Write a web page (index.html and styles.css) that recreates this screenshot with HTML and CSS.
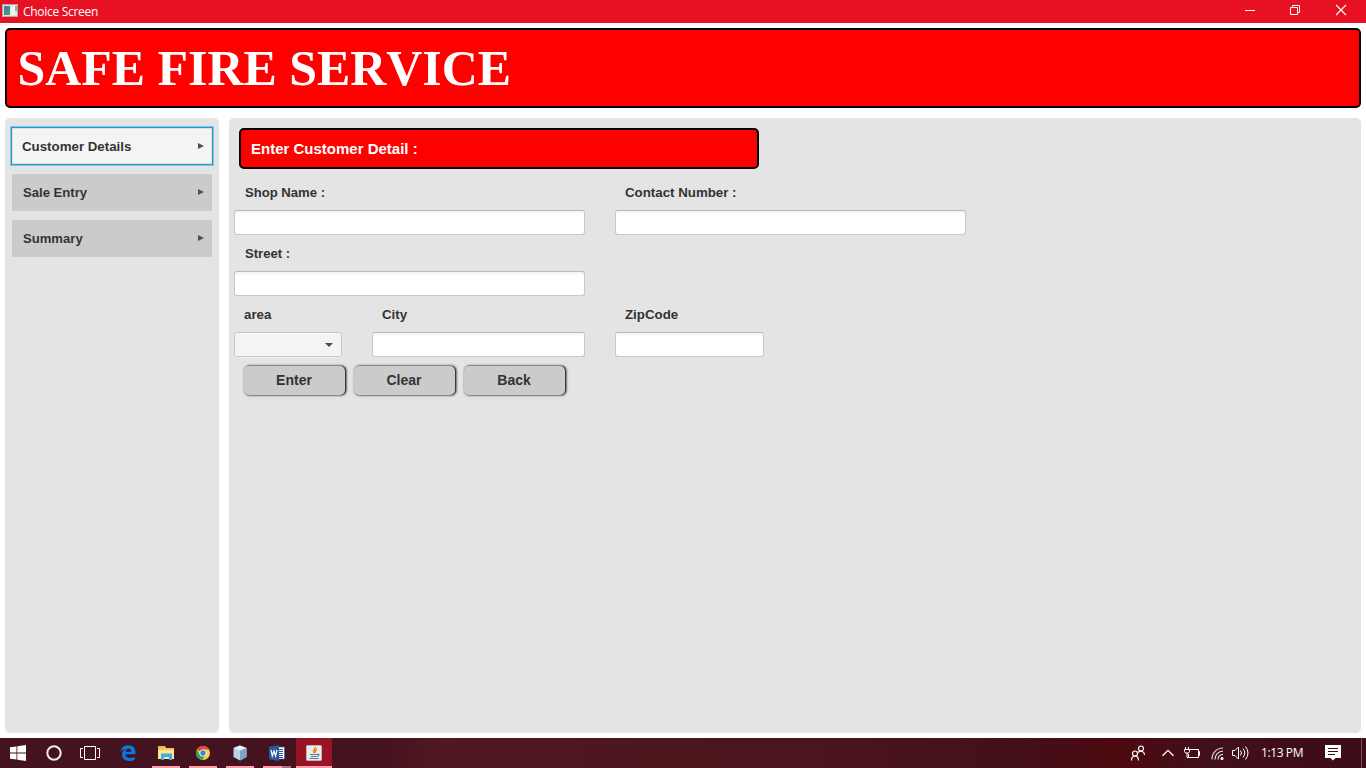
FILE: index.html
```html
<!DOCTYPE html>
<html lang="en">
<head>
<meta charset="utf-8">
<title>Choice Screen</title>
<link rel="stylesheet" href="styles.css">
</head>
<body>
<header class="titlebar">
  <svg class="app-icon" width="16" height="14" viewBox="0 0 16 14"><rect width="15" height="12" x=".5" y=".5" fill="#dfe6e9" stroke="#a9a9b4"/><defs><linearGradient id="g1" x2="1" y2="1"><stop stop-color="#4773a8"/><stop offset="1" stop-color="#4da768"/></linearGradient></defs><rect x="2" y="2" width="6" height="9" fill="url(#g1)"/><rect x="9" y="2" width="4" height="9" fill="#f4f4f4"/><rect x="13" y="2" width="2" height="5" fill="#82b5a2"/></svg>
  <span class="window-title">Choice Screen</span>
  <div class="window-controls">
    <svg width="45" height="23" viewBox="0 0 45 23"><path d="M14 10.500h10" stroke="#fff"/></svg>
    <svg width="46" height="23" viewBox="0 0 46 23"><path d="M14.500 7.500h7v7h-7zM16.500 7.500v-2h7v7h-2" fill="none" stroke="#fff"/></svg>
    <svg width="45" height="23" viewBox="0 0 45 23"><path d="M14 5l10 10M24 5L14 15" stroke="#fff" stroke-width="1.100"/></svg>
  </div>
</header>
<main class="window">
  <h1 class="banner">SAFE FIRE SERVICE</h1>
  <div class="columns">
    <nav class="sidebar">
      <button class="menu active">Customer Details<i class="arrow"></i></button>
      <button class="menu">Sale Entry<i class="arrow"></i></button>
      <button class="menu">Summary<i class="arrow"></i></button>
    </nav>
    <section class="content">
      <h2 class="section-title">Enter Customer Detail :</h2>
      <form class="form">
        <label class="field wide"><span>Shop Name :</span><input type="text"></label>
        <label class="field contact"><span>Contact Number :</span><input type="text"></label>
        <label class="field wide"><span>Street :</span><input type="text"></label>
        <div class="field area"><span>area</span><div class="combo"><svg width="8" height="4" viewBox="0 0 8 4"><path d="M0 0h8L4 4z" fill="#4b4b4b"/></svg></div></div>
        <label class="field city"><span>City</span><input type="text"></label>
        <label class="field zip"><span>ZipCode</span><input type="text"></label>
      </form>
      <div class="actions"><button>Enter</button><button>Clear</button><button>Back</button></div>
    </section>
  </div>
</main>
<footer class="taskbar">
  <div class="task start"><svg width="16" height="16" viewBox="0 0 16 16"><path d="M0 2.300L6.500 1.400v6.200H0zM7.300 1.200L16 0v7.600H7.300zM0 8.400h6.500v6.200L0 13.700zM7.300 8.400H16V16l-8.700-1.200z" fill="#fff"/></svg></div>
  <div class="task"><svg width="16" height="16" viewBox="0 0 16 16"><circle cx="8" cy="8" r="6.700" fill="none" stroke="#eee" stroke-width="2"/></svg></div>
  <div class="task view"><svg width="20" height="16" viewBox="0 0 20 16"><path d="M4.500 1.500h11v13h-11zM3 3.500H.5v9H3M17 3.500h2.500v9H17" fill="none" stroke="#fff"/></svg></div>
  <div class="task edge"><svg width="16" height="16" viewBox="0 0 16 16"><path d="M.5 7C1 2.900 4 .3 8.300.3c4.600 0 7.200 3.200 7.200 7v2H5.300c.1 2.500 2.100 3.700 4.600 3.700 1.900 0 3.400-.5 4.700-1.300v3.100c-1.400.8-3.200 1.200-5.200 1.200-4.400 0-7.400-2.500-7.400-6.400 0-2.600 1.500-4.800 3.900-5.900C3.700 4.100 1.900 5 .5 7zm4.900-.3h5.900c0-1.800-.9-3-2.800-3-1.700 0-2.800 1.100-3.100 3z" fill="#0a7ae0"/></svg></div>
  <div class="task open"><svg width="18" height="16" viewBox="0 0 18 16"><path d="M1 1h7l1 2h8v11H1z" fill="#f4c84f"/><path d="M2 2h5" stroke="#e69f2c"/><path d="M1 5h16v9H1z" fill="#ffe596"/><path d="M4 15V8.500h11V15h-3v-3H7v3z" fill="#3cafe3"/></svg></div>
  <div class="task open"><svg width="16" height="16" viewBox="0 0 16 16"><circle cx="8" cy="8" r="7" fill="#fbcf3d"/><path d="M8 8L1.900 4.500A7 7 0 0 1 14.100 4.500H8z" fill="#e84636"/><path d="M1.900 4.500A7 7 0 0 0 7.500 15L10.500 9.500 8 8 5 9.700z" fill="#35a257"/><circle cx="8" cy="8" r="3.500" fill="#fff"/><circle cx="8" cy="8" r="2.700" fill="#3c82e0"/></svg></div>
  <div class="task open"><svg width="14" height="16" viewBox="0 0 14 16"><path d="M7 .5l6.500 2.500v9L7 15.500.5 12V3z" fill="#b7d3e8"/><path d="M7 .5L13.500 3 7 5.800.5 3z" fill="#e5f1f7"/><path d="M7 5.800L13.500 3v9L7 15.500z" fill="#7ea5c6"/></svg></div>
  <div class="task open word"><svg width="16" height="16" viewBox="0 0 16 16"><path d="M9 2h6.500v12H9z" fill="#fff" stroke="#2b579a" stroke-width=".6"/><path d="M10 4.500h4M10 6.500h4M10 8.500h4M10 10.500h4M10 12.500h4" stroke="#2b579a"/><path d="M0 1.800L10 0v16L0 14.200z" fill="#2857a0"/><path d="M2 5l1.300 6L5 6l1.600 5L8 5" fill="none" stroke="#fff" stroke-width="1.200"/></svg></div>
  <div class="task open current"><svg width="16" height="16" viewBox="0 0 16 16"><rect x=".5" y=".5" width="15" height="15" rx="1" fill="#e9ecea" stroke="#b6b6b6"/><path d="M9.500 2C10 4 6 4.800 8 8M11 4.500C8.500 5.500 9.500 6.500 9 8" fill="none" stroke="#ee7b20" stroke-width="1.500"/><path d="M4 9.500h7M5 11.500h5.500M3.500 13.500h9M11 9.500c3-1 2 1.500 0 2" fill="none" stroke="#557c95" stroke-width="1.200"/></svg></div>
  <div class="tray">
    <svg class="people" width="16" height="16" viewBox="0 0 16 16"><g fill="none" stroke="#fff" stroke-width="1.200"><circle cx="5" cy="8.500" r="2.500"/><path d="M1.500 15.500c0-6 7-6 7 0"/><circle cx="11" cy="3.500" r="2.500"/><path d="M8 7.500c3-2.500 6.500-1 6.500 2.500"/></g></svg>
    <svg class="chevron" width="12" height="8" viewBox="0 0 12 8"><path d="M.5 6.800L6 1.300l5.500 5.500" fill="none" stroke="#fff" stroke-width="1.300"/></svg>
    <svg class="battery" width="16" height="12" viewBox="0 0 16 12"><path d="M6 2.500h8.500v8H4.500V7M14.500 4.500h1v4h-1M1.500 0v2M4.500 0v2M.5 2.500h5v2l-1 1.500h-3L.5 4.500zM3 6v4.500h2" fill="none" stroke="#fff"/></svg>
    <svg class="wifi" width="13" height="13" viewBox="0 0 13 13"><g fill="none" stroke="#e0d6d8" stroke-width="1.200"><path d="M1 12.500A11 11 0 0 1 12 1"/><path d="M4 12.500A8 8 0 0 1 12 4.200"/><path d="M7 12.500A5 5 0 0 1 12 7.400"/></g><circle cx="11" cy="11.500" r="1.500" fill="#fff"/></svg>
    <svg class="sound" width="17" height="14" viewBox="0 0 17 14"><g fill="none" stroke="#fff"><path d="M.5 4.500h2.500L6.500 1v12L3 9.500H.5zM8.500 4.500q2 2.500 0 5"/><path d="M11 2.500q3.500 4.500 0 9M13.500.5q5 6.500 0 13"/></g></svg>
    <time class="clock">1:13 PM</time>
    <svg class="notice" width="16" height="16" viewBox="0 0 16 16"><path d="M0 0h16v13h-5.500L8 15.500 5.500 13H0z" fill="#fff"/><path d="M3 3.500h10M3 6.500h10M3 9.500h7" stroke="#3d0c17"/></svg>
    <i class="desktop-edge"></i>
  </div>
</footer>
</body>
</html>
```
FILE: styles.css
```css
* { box-sizing: border-box; }
body { margin: 0; width: 1366px; height: 768px; overflow: hidden; display: flex; flex-direction: column; background: #fff; font-family: "Liberation Sans", Arial, sans-serif; color: #333; }
button, input { font: inherit; color: inherit; margin: 0; }
svg { display: block; flex: none; }
.titlebar { height: 23px; flex: none; background: #e81123; color: #fff; display: flex; align-items: center; padding-left: 2px; }
.app-icon { margin-bottom: 1px; }
.window-title { margin-left: 5px; font: 12px/23px "Open Sans", sans-serif; letter-spacing: -.3px; }
.window-controls { margin-left: auto; margin-right: -5px; display: flex; width: 140px; }
.window { height: 715px; flex: none; padding: 5px; display: flex; flex-direction: column; gap: 10px; }
.banner { margin: 0; height: 80px; flex: none; background: #f00; border: 2px solid #000; border-radius: 5px; color: #fff; font: bold 49.900px/76px "Liberation Serif", "Times New Roman", serif; padding: 1px 0 0 10.500px; font-kerning: none; }
.columns { display: flex; gap: 10px; flex: 1; }
.sidebar, .content { background: #e4e4e4; border-radius: 5px; }
.sidebar { width: 214px; padding: 10px 7px; display: flex; flex-direction: column; gap: 9px; }
.menu { height: 37px; border: 0; background: #cbcbcb; padding: 0 8px 0 11px; display: flex; align-items: center; justify-content: space-between; font-size: 13.100px; font-weight: bold; }
.menu.active { height: 36px; margin-bottom: 1px; background: #f4f4f4; padding-left: 10px; font-size: 13.300px; box-shadow: 0 0 0 1px #1a9dcc, 0 0 0 2px #83c8df, inset 0 0 0 1px #e0ded4; }
.arrow { border-left: 6px solid #505050; border-top: 3px solid transparent; border-bottom: 3px solid transparent; margin-bottom: 1px; }
.content { flex: 1; padding: 10px 5px; }
.section-title { margin: 0 0 9px 5px; width: 520px; height: 41px; background: #f00; border: 2px solid #000; border-radius: 5px; color: #fff; font-size: 15px; line-height: 37px; padding-left: 10px; }
.form { display: grid; grid-template-columns: 108px 213px 351px; column-gap: 30px; grid-template-rows: repeat(3, 61px); }
.field { display: block; font-size: 13.300px; font-weight: bold; }
.field span { display: block; height: 32px; line-height: 29px; padding-left: 10px; }
.wide { grid-column: 1 / 3; }
.wide span { padding-left: 11px; font-size: 13.100px; }
.contact, .zip { grid-column: 3; }
.area { grid-column: 1; }
.field input { display: block; width: 100%; height: 25px; border: 1px solid #c8c8c8; border-top-color: #b9b9b9; border-radius: 3px; background: linear-gradient(#f4f4f4, #fff 4px); outline: 0; }
.field.zip input { width: 149px; }
.combo { height: 25px; border: 1px solid #c6c6c6; border-radius: 3px; background: #f4f4f4; box-shadow: inset 0 1px #fbfbfb, 0 1px #efefef; display: flex; align-items: center; justify-content: flex-end; padding-right: 8px; }
.actions { display: flex; gap: 9px; padding: 5px 0 0 10px; }
.actions button { width: 101px; height: 29px; border: 0; border-radius: 5px; padding: 0 1px 1px 0; background: #cbcbcb; font-size: 14px; font-weight: bold; box-shadow: 1px 0 1px #333, 1px 0 2px 1px #777; }
.taskbar { height: 30px; flex: none; display: flex; background: linear-gradient(90deg, #45121f 0, #45121f 28%, #501820 32%, #4a151c 60%, #430f19 75%, #4c090f 82%, #42101a 88%, #3c0c17 100%); }
.task { width: 37px; display: flex; align-items: center; justify-content: center; position: relative; }
.start { width: 35px; }
.view { padding-right: 1px; }
.edge { width: 39px; padding-right: 1px; }
.open { padding-right: 1px; }
.open::after { content: ""; position: absolute; bottom: 0; left: 4px; width: 28px; height: 2px; background: #ff9da9; }
.word::after { background: linear-gradient(90deg, #ff9da9 19px, #a8747b 19px); }
.current { width: 36px; padding-right: 0; background: #981323; }
.current::after { left: 0; width: 36px; }
.tray { margin-left: auto; width: 236px; display: flex; align-items: center; color: #fff; }
.chevron { margin-left: 16px; }
.battery { margin-left: 10px; }
.wifi { margin-left: 11px; }
.sound { margin-left: 8px; }
.clock { margin-left: 12px; width: 45px; white-space: nowrap; font: 12px/30px "Open Sans", sans-serif; letter-spacing: -.4px; }
.notice { margin-left: 19px; }
.desktop-edge { width: 1px; height: 30px; background: #75505a; margin-left: auto; margin-right: 4px; }
```
